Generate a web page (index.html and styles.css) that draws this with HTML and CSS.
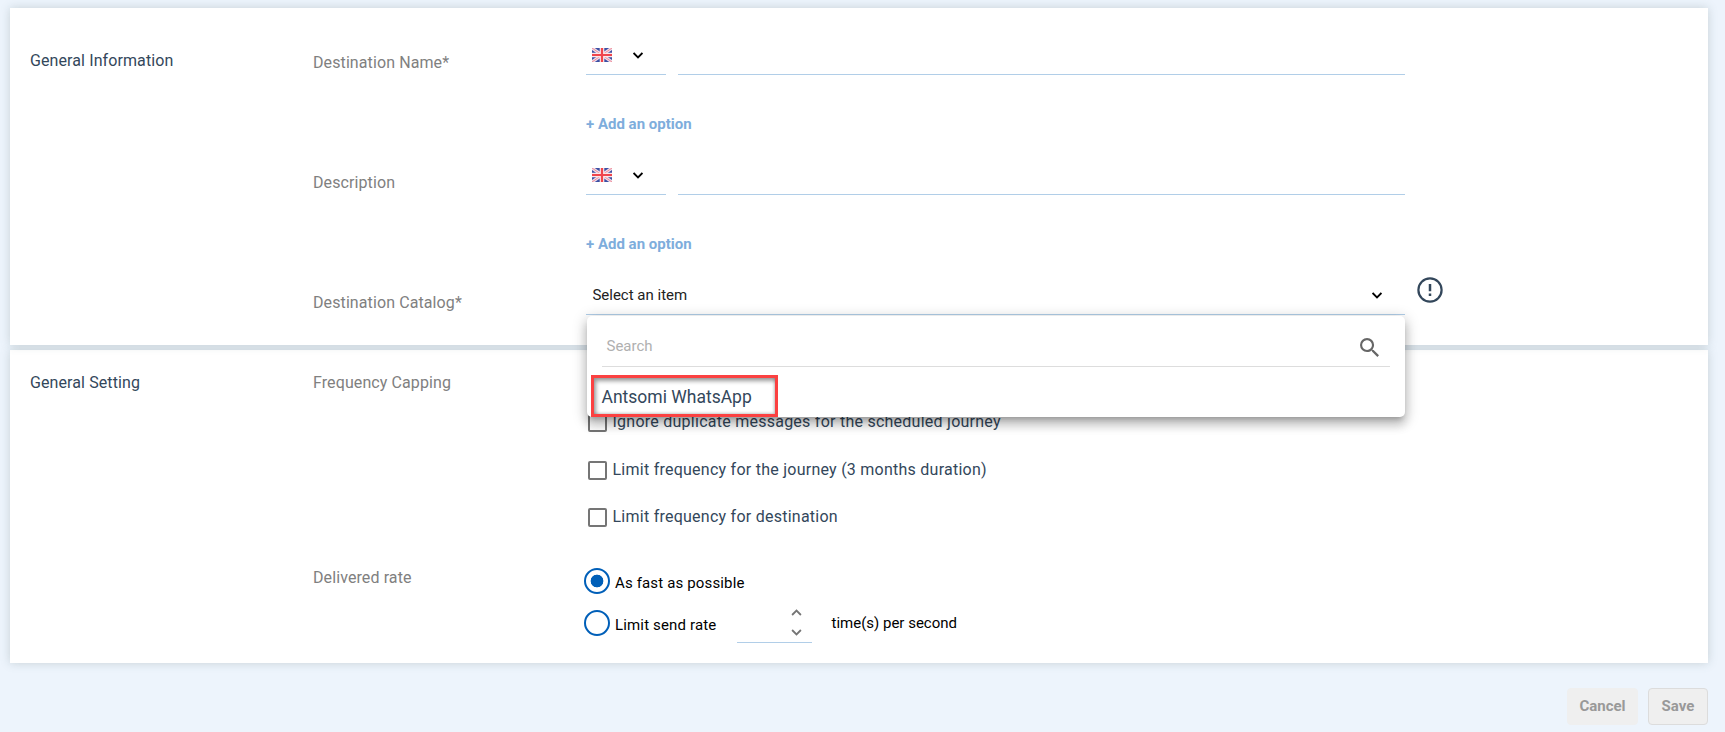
FILE: index.html
```html
<!DOCTYPE html>
<html lang="en">
<head>
<meta charset="utf-8">
<title>Destination</title>
<link rel="stylesheet" href="styles.css">
</head>
<body>
<svg class="defs" width="0" height="0">
  <symbol id="flag" viewBox="0 0 20 14">
    <rect width="20" height="14" fill="#3c50a4"/>
    <path d="M0 0L20 14M20 0L0 14" stroke="#efdbe8" stroke-width="3.2"/>
    <path d="M0 0L20 14M20 0L0 14" stroke="#f08c98" stroke-width="1"/>
    <path d="M10 0V14M0 7H20" stroke="#fbe6e8" stroke-width="4.6"/>
    <path d="M10 0V14M0 7H20" stroke="#f0454c" stroke-width="2.2"/>
  </symbol>
  <symbol id="chevron" viewBox="0 0 10 7">
    <path d="M.6 1L5 5.400L9.400 1" fill="none" stroke="currentColor" stroke-width="1.8"/>
  </symbol>
</svg>
<main class="page">
  <section class="panel panel-info">
    <h2 class="panel-title">General Information</h2>
    <div class="rows">
      <div class="row">
        <label class="label">Destination Name*</label>
        <div class="control">
          <div class="fields">
            <div class="lang"><svg class="flag"><use href="#flag"/></svg><svg class="chevron"><use href="#chevron"/></svg></div>
            <div class="input"></div>
          </div>
          <a class="add">+ Add an option</a>
        </div>
      </div>
      <div class="row">
        <label class="label">Description</label>
        <div class="control">
          <div class="fields">
            <div class="lang"><svg class="flag"><use href="#flag"/></svg><svg class="chevron"><use href="#chevron"/></svg></div>
            <div class="input"></div>
          </div>
          <a class="add">+ Add an option</a>
        </div>
      </div>
      <div class="row row-last">
        <label class="label">Destination Catalog*</label>
        <div class="control">
          <div class="select"><span>Select an item</span><svg class="chevron"><use href="#chevron"/></svg></div>
          <div class="menu">
            <div class="search">
              <span>Search</span>
              <svg class="search-icon" viewBox="3 3 17.5 17.5"><path fill="#666" d="M15.5 14h-.79l-.28-.27A6.471 6.471 0 0 0 16 9.500 6.500 6.500 0 1 0 9.500 16c1.610 0 3.090-.59 4.230-1.570l.27.28v.79l5 4.990L20.490 19l-4.990-5zm-6 0C7.010 14 5 11.990 5 9.500S7.010 5 9.500 5 14 7.010 14 9.500 11.990 14 9.500 14z"/></svg>
            </div>
            <div class="option">Antsomi WhatsApp</div>
          </div>
        </div>
        <svg class="alert" viewBox="0 0 26 26"><circle cx="13" cy="13" r="11.600" fill="none" stroke="#33475b" stroke-width="2.200"/><path d="M13 7V14.300M13 16.600V19" stroke="#33475b" stroke-width="2.500"/></svg>
      </div>
    </div>
  </section>

  <section class="panel panel-setting">
    <h2 class="panel-title">General Setting</h2>
    <div class="rows">
      <div class="row row-capping">
        <label class="label">Frequency Capping</label>
        <div class="checks">
          <div class="check check-first"><span class="box"></span><span class="check-text">Ignore duplicate messages for the scheduled journey</span></div>
          <div class="check"><span class="box"></span><span class="check-text">Limit frequency for the journey (3 months duration)</span></div>
          <div class="check"><span class="box"></span><span class="check-text">Limit frequency for destination</span></div>
        </div>
      </div>
      <div class="row">
        <label class="label">Delivered rate</label>
        <div class="radios">
          <div class="radio"><span class="dot dot-on"></span><span class="radio-text">As fast as possible</span></div>
          <div class="radio"><span class="dot"></span><span class="radio-text rate-text">Limit send rate</span>
            <div class="stepper"><svg class="step up"><use href="#chevron"/></svg><svg class="step"><use href="#chevron"/></svg></div>
            <span class="unit">time(s) per second</span>
          </div>
        </div>
      </div>
    </div>
  </section>

  <footer class="actions">
    <button class="btn cancel" disabled>Cancel</button>
    <button class="btn save" disabled>Save</button>
  </footer>
</main>
</body>
</html>
```
FILE: styles.css
```css
* { box-sizing: border-box; }
body { margin: 0; background: #edf4fc; font-family: Roboto, "Liberation Sans", sans-serif; font-size: 16px; line-height: 20px; color: #33475b; }
.defs { position: absolute; }
.page { height: 732px; padding: 8px 17px 0 10px; overflow: hidden; }
.panel { display: flex; background: #fff; box-shadow: 0 0 9px rgba(110, 128, 130, .3); }
.panel-info { height: 337px; padding: 30px 0 0 20px; margin-bottom: 5px; position: relative; z-index: 1; }
.panel-setting { height: 313px; padding: 23px 0 0 20px; }
.panel-title { width: 283px; margin: 0; font-size: 16px; font-weight: 400; letter-spacing: .1px; }
.panel-info .panel-title { padding-top: 13px; }
.row { display: flex; height: 120px; }
.label { width: 273px; color: #808080; letter-spacing: .1px; }
.panel-info .label { padding-top: 15px; }
.control { width: 819px; position: relative; }
.fields { display: flex; gap: 12px; }
.lang, .input, .select { height: 37px; border-bottom: 1px solid #b1cee8; }
.lang { width: 80px; padding: 10px 0 0 6px; display: flex; }
.flag { width: 20px; height: 14px; margin-right: 21px; }
.chevron { width: 10px; height: 7px; margin-top: 4px; color: #000; }
.input { width: 727px; }
.add { display: block; margin-top: 39px; font-size: 15px; font-weight: 700; color: #7eaddc; }
.select { display: flex; justify-content: space-between; padding: 7px 23px 0 6.400px; font-size: 15px; color: #222; }
.select .chevron { margin-top: 7px; }
.menu { position: absolute; left: 1px; top: 38px; width: 818px; height: 101px; padding: 11px 15px 0; background: #fff; border-radius: 5px; box-shadow: 0 5px 5px -3px rgba(0,0,0,.2), 0 8px 10px 1px rgba(0,0,0,.14), 0 3px 14px 2px rgba(0,0,0,.18); }
.search { display: flex; justify-content: space-between; height: 40px; padding: 9px 11px 0 4.500px; border-bottom: 1px solid #ddd; font-size: 15px; color: #b0b0b0; }
.search-icon { width: 19px; height: 19px; margin-top: 2px; }
.option { width: 187px; height: 42px; margin: 8px 0 0 -11px; padding: 9px 0 0 7.500px; border: 3px solid #fb4141; font-size: 17.500px; box-shadow: inset 2px 3px 4px rgba(0,0,0,.4), inset -1px -1px 3px rgba(0,0,0,.2); }
.alert { width: 26px; height: 26px; margin: -1px 0 0 12px; }
.row-capping { height: 195px; }
.checks { padding-top: 38px; display: flex; flex-direction: column; gap: 26px; letter-spacing: .25px; }
.check { display: flex; gap: 5.500px; padding-left: 2px; height: 21px; }
.check-first { margin-bottom: 1px; }
.box { width: 19px; height: 19px; margin-top: 2px; border: 2px solid #757575; border-radius: 2px; }
.check-text { padding-top: 1px; }
.radios { font-size: 15px; color: #000; }
.radio { display: flex; height: 42px; margin-left: -2px; }
.dot { width: 26px; height: 26px; border: 2px solid #005fb8; border-radius: 50%; }
.dot-on { background: radial-gradient(circle, #005fb8 6px, transparent 6.700px); }
.radio-text { padding: 5px 0 0 5px; letter-spacing: .15px; }
.rate-text { width: 127px; }
.stepper { width: 75px; height: 33px; border-bottom: 1px solid #b1cee8; padding: 0 10px 0 0; display: flex; flex-direction: column; align-items: flex-end; gap: 14px; }
.step { width: 11px; height: 7px; margin-top: -1px; color: #757575; }
.up { transform: rotate(180deg); }
.unit { padding: 3px 0 0 19.500px; }
.actions { display: flex; justify-content: flex-end; gap: 10px; padding-top: 25px; }
.btn { height: 37px; padding: 0 0 2px; background: #efefef; border: 1px solid #efefef; border-radius: 4px; font: 700 15px/20px Roboto, "Liberation Sans", sans-serif; color: #999; }
.cancel { width: 71px; }
.save { width: 60px; border-color: #dcdcdc; }
```
